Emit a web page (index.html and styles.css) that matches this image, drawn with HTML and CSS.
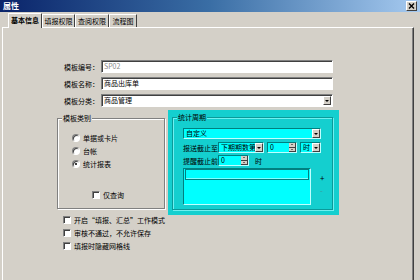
FILE: index.html
```html
<!DOCTYPE html>
<html lang="zh">
<head>
    <meta charset="UTF-8">
    <title>属性</title>
    <link rel="stylesheet" href="styles.css">
</head>
<body>
    <div class="titlebar">
        <span class="title">属性</span>
        <span class="close">
            <svg width="7" height="6" viewBox="0 0 7 6"><path d="M1 0.5 L6 5.5 M6 0.5 L1 5.5" stroke="#000" stroke-width="1.4"/></svg>
        </span>
    </div>

    <div class="tabs">
        <div class="tab active" style="width: 34px">基本信息</div>
        <div class="tab" style="width: 33px">填报权限</div>
        <div class="tab" style="width: 34px">查阅权限</div>
        <div class="tab" style="width: 28px">流程图</div>
    </div>

    <div class="panel">
        <div class="fields">
            <div class="field">
                <label>模板编号：</label>
                <div class="input disabled">SP02</div>
            </div>
            <div class="field">
                <label>模板名称：</label>
                <div class="input">商品出库单</div>
            </div>
            <div class="field">
                <label>模板分类：</label>
                <div class="input select">商品管理<span class="drop"></span></div>
            </div>
        </div>

        <div class="groups">
            <div class="groupbox kind">
                <span class="legend">模板类别</span>
                <div class="radio"><span class="dot"></span>单据或卡片</div>
                <div class="radio"><span class="dot"></span>台帐</div>
                <div class="radio checked"><span class="dot"></span>统计报表</div>
                <div class="check only"><span class="box"></span>仅查询</div>
            </div>

            <div class="period">
                <div class="groupbox cyanbox">
                    <span class="legend">统计周期</span>
                    <div class="cfield wide">自定义<span class="drop"></span></div>
                    <div class="crow">
                        <span class="clabel">报送截止至</span>
                        <div class="cfield" style="width: 46px">下期期数第<span class="drop"></span></div>
                        <div class="cfield spin" style="width: 30px">0<span class="spinbtn"><i class="up"></i><i class="down"></i></span></div>
                        <div class="cfield" style="width: 21px">时<span class="drop"></span></div>
                    </div>
                    <div class="crow">
                        <span class="clabel">提醒截止前</span>
                        <div class="cfield spin" style="width: 31px">0<span class="spinbtn"><i class="up"></i><i class="down"></i></span></div>
                        <span class="unit">时</span>
                    </div>
                    <div class="listrow">
                        <div class="list"><div class="listedit"></div></div>
                        <div class="listbtns">
                            <span class="plus">+</span>
                            <span class="minus">-</span>
                        </div>
                    </div>
                </div>
            </div>
        </div>

        <div class="options">
            <div class="check"><span class="box"></span>开启“填报、汇总”工作模式</div>
            <div class="check"><span class="box"></span>审核不通过，不允许保存</div>
            <div class="check"><span class="box"></span>填报时隐藏网格线</div>
        </div>
    </div>
</body>
</html>
```

FILE: styles.css
```css
body {
    margin: 0;
    width: 420px;
    height: 280px;
    overflow: hidden;
    background-color: #d4d0c8;
    font-family: "Noto Sans CJK SC", sans-serif;
    font-size: 7px;
    color: #000;
}

/* title bar */
.titlebar {
    height: 12px;
    padding: 0 3px;
    display: flex;
    align-items: center;
    justify-content: space-between;
    background: linear-gradient(to right, #0a246a, #3a6ea5 50%, #a6caf0);
}
.title {
    color: #fff;
    font-weight: bold;
    font-size: 8px;
    line-height: 12px;
}
.close {
    width: 7px;
    height: 6px;
    padding: 1px;
    display: flex;
    background-color: #d4d0c8;
    border: 1px solid;
    border-color: #fff #404040 #404040 #fff;
}

/* tabs */
.tabs {
    height: 15px;
    padding-left: 8px;
    display: flex;
    align-items: flex-end;
}
.tab {
    height: 13px;
    line-height: 12px;
    text-align: center;
    box-sizing: border-box;
    border-top: 1px solid #fff;
    border-left: 1px solid #fff;
    border-right: 1px solid #404040;
}
.tab.active {
    height: 15px;
    margin-bottom: -1px;
    position: relative;
    background-color: #d4d0c8;
    font-weight: bold;
}

/* page panel */
.panel {
    margin: 0 6px 0 2px;
    height: 220px;
    padding-top: 32px;
    border: 1px solid;
    border-bottom: 0;
    border-color: #fff #404040 #404040 #fff;
    box-shadow: inset -1px 0 #808080;
}

.fields {
    display: flex;
    flex-direction: column;
    gap: 4px;
}
.field {
    display: flex;
    align-items: center;
    height: 13px;
}
.field label {
    width: 96px;
    padding-right: 2px;
    text-align: right;
}
.input {
    position: relative;
    width: 232px;
    height: 13px;
    box-sizing: border-box;
    padding-left: 2px;
    line-height: 11px;
    background-color: #fff;
    border: 1px solid;
    border-color: #808080 #fff #fff #808080;
    box-shadow: inset 1px 1px #404040;
}
.input.disabled {
    color: #8a8a8a;
}
.input.select .drop {
    right: 1px;
    top: 1px;
}

/* dropdown button */
.drop {
    position: absolute;
    right: 0;
    top: 0;
    width: 8px;
    height: 9px;
    box-sizing: border-box;
    background-color: #d4d0c8;
    border: 1px solid;
    border-color: #fff #404040 #404040 #fff;
    display: flex;
    align-items: center;
    justify-content: center;
}
.drop::after {
    content: "";
    border-left: 2px solid transparent;
    border-right: 2px solid transparent;
    border-top: 2px solid #000;
}

/* lower part */
.groups {
    margin-top: 3px;
    padding-left: 54px;
    display: flex;
    align-items: flex-start;
}
.groupbox {
    position: relative;
    border: 1px solid #808080;
    box-shadow: inset 1px 1px #fff, 1px 1px 0 #fff;
}
.legend {
    position: absolute;
    top: -6px;
    left: 4px;
    padding: 0 1px;
    line-height: 10px;
    background-color: #d4d0c8;
}
.kind {
    margin-top: 8px;
    width: 108px;
    height: 91px;
    box-sizing: border-box;
    padding: 12px 0 0 14px;
}
.radio, .check {
    height: 13px;
    display: flex;
    align-items: center;
}
.dot {
    width: 8px;
    height: 8px;
    margin-right: 3px;
    box-sizing: border-box;
    border-radius: 50%;
    background-color: #fff;
    border: 1px solid;
    border-color: #808080 #fff #fff #808080;
    box-shadow: inset 1px 1px #404040;
    display: flex;
    align-items: center;
    justify-content: center;
}
.radio.checked .dot::after {
    content: "";
    width: 2px;
    height: 2px;
    border-radius: 50%;
    background-color: #000;
}
.box {
    width: 8px;
    height: 8px;
    margin-right: 3px;
    box-sizing: border-box;
    background-color: #fff;
    border: 1px solid;
    border-color: #808080 #fff #fff #808080;
    box-shadow: inset 1px 1px #404040;
}
.check.only {
    margin: 18px 0 0 20px;
}

/* cyan period box */
.period {
    margin-left: 3px;
    width: 171px;
    height: 105px;
    box-sizing: border-box;
    padding: 7px 6px 5px 4px;
    background-color: #14cfcf;
}
.cyanbox {
    height: 93px;
    box-sizing: border-box;
    padding: 10px 0 0 10px;
    border-color: #0a9a9a;
    box-shadow: inset 1px 1px #6ff0f0, 1px 1px 0 #6ff0f0;
}
.cyanbox .legend {
    background-color: #14cfcf;
}
.cfield {
    position: relative;
    height: 11px;
    box-sizing: border-box;
    padding-left: 2px;
    line-height: 9px;
    background-color: #00ffff;
    border: 1px solid;
    border-color: #008080 #bfffff #bfffff #008080;
    white-space: nowrap;
    overflow: hidden;
}
.cfield.wide {
    width: 138px;
}
.crow {
    margin-top: 3px;
    height: 11px;
    display: flex;
    align-items: center;
    gap: 3px;
}
.crow + .crow {
    margin-top: 2px;
}
.clabel {
    width: 35px;
    margin-right: -3px;
    white-space: nowrap;
}
.unit {
    margin-left: 3px;
}
.spinbtn {
    position: absolute;
    right: 0;
    top: 0;
    width: 7px;
    height: 9px;
    display: flex;
    flex-direction: column;
    background-color: #d4d0c8;
}
.spinbtn i {
    flex: 1;
    display: flex;
    align-items: center;
    justify-content: center;
    border: solid;
    border-color: #fff #404040 #404040 #fff;
    border-width: 0 1px 1px 0;
}
.spinbtn .up::after {
    content: "";
    border-left: 1.5px solid transparent;
    border-right: 1.5px solid transparent;
    border-bottom: 1.5px solid #000;
}
.spinbtn .down::after {
    content: "";
    border-left: 1.5px solid transparent;
    border-right: 1.5px solid transparent;
    border-top: 1.5px solid #000;
}
.listrow {
    margin-top: 2px;
    display: flex;
}
.list {
    width: 128px;
    height: 37px;
    box-sizing: border-box;
    background-color: #00ffff;
    border: 1px solid;
    border-color: #008080 #bfffff #bfffff #008080;
}
.listedit {
    height: 9px;
    margin: 0 1px;
    border: 1px solid #008080;
    box-shadow: inset 0 -1px #7fffff;
}
.listbtns {
    margin-left: 9px;
    padding-top: 3px;
    display: flex;
    flex-direction: column;
    line-height: 13px;
    font-size: 8px;
}
.minus {
    color: #3a9a9a;
}

/* bottom options */
.options {
    margin: -2px 0 0 60px;
}
```
